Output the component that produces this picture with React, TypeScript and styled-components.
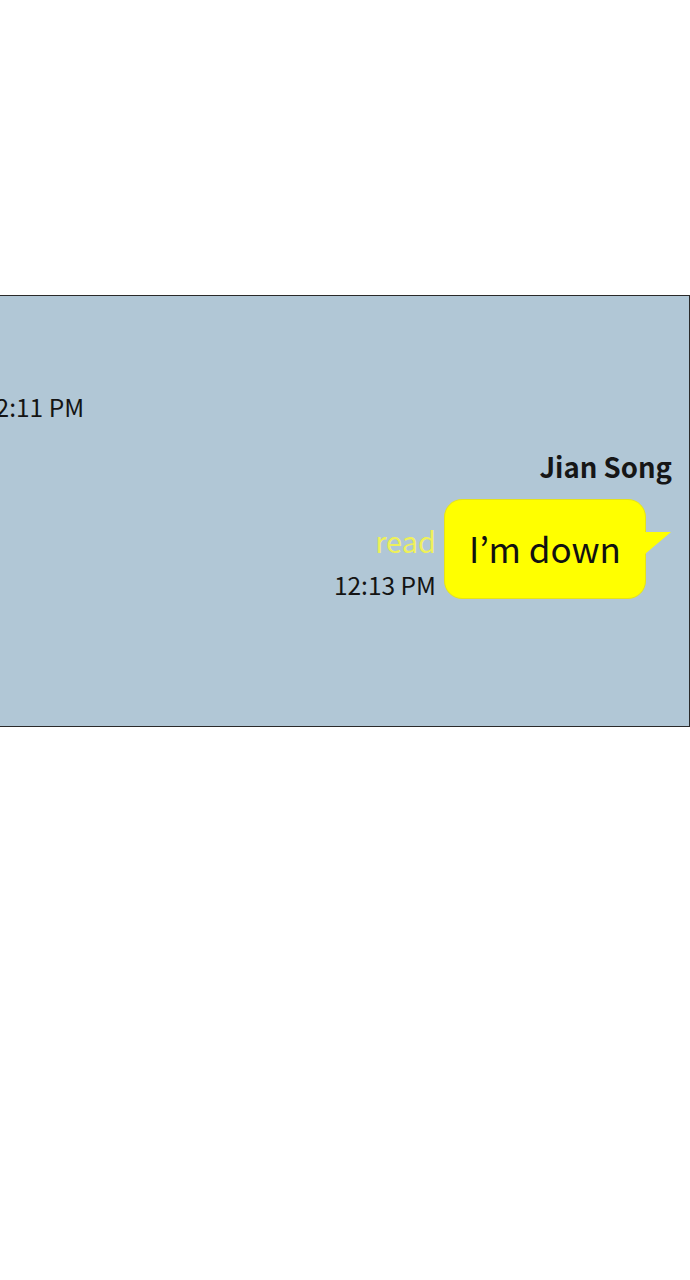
import React from "react";
import styled, { createGlobalStyle } from "styled-components";

const GlobalStyle = createGlobalStyle`
  html, body {
    margin: 0;
    padding: 0;
    background: #ffffff;
    overflow: hidden;
  }
  body {
    font-family: "Noto Sans CJK KR", "Noto Sans", sans-serif;
  }
`;

const Page = styled.div`
  width: 690px;
  height: 1280px;
  padding-top: 295px;
  box-sizing: border-box;
`;

const ChatPanel = styled.section`
  margin-left: -40px;
  width: 730px;
  height: 432px;
  box-sizing: border-box;
  border: 1px solid #2a2a2a;
  background: #b1c7d6;
  padding: 96px 17px 0 0;
  display: flex;
  flex-direction: column;
`;

const Time = styled.span`
  font-size: 24.5px;
  line-height: 30px;
  color: #141414;
  white-space: nowrap;
`;

const LeftRow = styled.div`
  display: flex;
  padding-left: 21px;
`;

const RightBlock = styled.div`
  display: flex;
  flex-direction: column;
  align-items: flex-end;
  margin-top: 27px;
`;

const Name = styled.div`
  font-size: 27.5px;
  font-weight: 700;
  line-height: 34px;
  color: #161616;
`;

const MessageRow = styled.div`
  display: flex;
  align-items: flex-end;
  gap: 8px;
  margin-top: 16px;
  padding-right: 26px;
`;

const Meta = styled.div`
  display: flex;
  flex-direction: column;
  align-items: flex-end;
  margin-bottom: -1px;
`;

const Read = styled.span`
  font-size: 29px;
  line-height: 34px;
  color: #eef05a;
  margin-bottom: 13px;
`;

const Bubble = styled.div`
  position: relative;
  width: 202px;
  height: 100px;
  box-sizing: border-box;
  border-radius: 18px;
  background: #ffff00;
  border: 1px solid #e6e21a;
  display: flex;
  align-items: center;
  justify-content: center;
  font-size: 35px;
  color: #111111;

  &::after {
    content: "";
    position: absolute;
    left: 200px;
    top: 32px;
    width: 0;
    height: 0;
    border-top: 22px solid #ffff00;
    border-right: 26px solid transparent;
  }
`;

const BubbleText = styled.span`
  line-height: 40px;
  margin-top: -2px;
`;

export default function App() {
  return (
    <Page>
      <GlobalStyle />
      <ChatPanel>
        <LeftRow>
          <Time>12:11 PM</Time>
        </LeftRow>
        <RightBlock>
          <Name>Jian Song</Name>
          <MessageRow>
            <Meta>
              <Read>read</Read>
              <Time>12:13 PM</Time>
            </Meta>
            <Bubble>
              <BubbleText>I’m down</BubbleText>
            </Bubble>
          </MessageRow>
        </RightBlock>
      </ChatPanel>
    </Page>
  );
}
